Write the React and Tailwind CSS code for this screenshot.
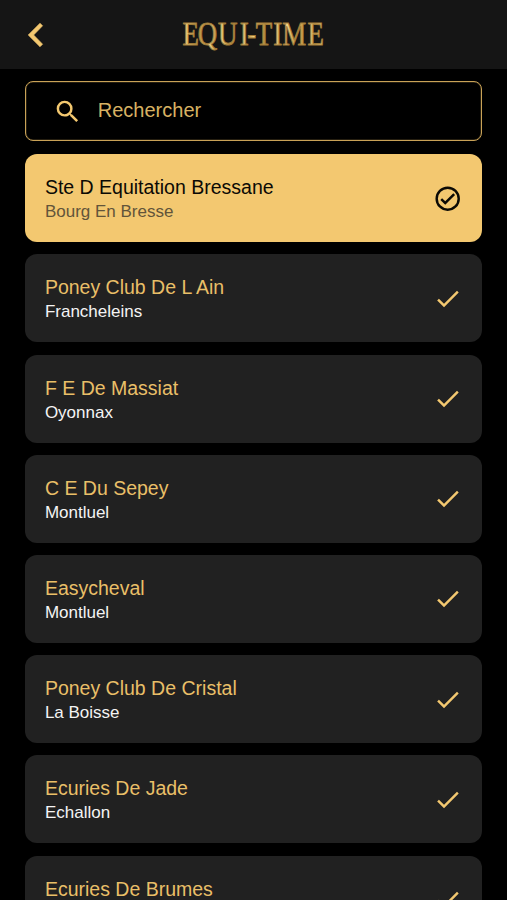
import React, { useState } from 'react';

const clubs = [
    { id: 1, name: 'Ste D Equitation Bressane', city: 'Bourg En Bresse' },
    { id: 2, name: 'Poney Club De L Ain', city: 'Francheleins' },
    { id: 3, name: 'F E De Massiat', city: 'Oyonnax' },
    { id: 4, name: 'C E Du Sepey', city: 'Montluel' },
    { id: 5, name: 'Easycheval', city: 'Montluel' },
    { id: 6, name: 'Poney Club De Cristal', city: 'La Boisse' },
    { id: 7, name: 'Ecuries De Jade', city: 'Echallon' },
    { id: 8, name: 'Ecuries De Brumes', city: '' },
];

const Logo = () => (
    <svg width="144" height="40" viewBox="0 0 144 40" role="img" aria-label="EQUI-TIME">
        <defs>
            <linearGradient id="gold" gradientUnits="userSpaceOnUse" x1="0" x2="21" y1="0" y2="0" spreadMethod="reflect">
                <stop offset="0" stopColor="#c59c4e" />
                <stop offset="0.35" stopColor="#f2d388" />
                <stop offset="0.65" stopColor="#d6ae5c" />
                <stop offset="1" stopColor="#b58d42" />
            </linearGradient>
        </defs>
        <text
            transform="scale(0.79 1)"
            x="0.5 20 45.5 73 82.5 93.5 115.5 127 159"
            y="30.5"
            fontSize="34"
            fill="url(#gold)"
            stroke="#a07b38"
            strokeWidth="1"
            className="font-['Liberation_Serif',serif]"
        >
            EQUI-TIME
        </text>
    </svg>
);

const CheckIcon = () => (
    <svg width="29.4" height="29.4" viewBox="0 0 24 24" fill="#f3c870">
        <path d="M9 16.17L4.83 12l-1.42 1.41L9 19 21 7l-1.41-1.41z" />
    </svg>
);

const CheckCircleIcon = () => (
    <svg width="29.4" height="29.4" viewBox="0 0 24 24" fill="#0b0a05">
        <path d="M12 2a10 10 0 1 0 0 20 10 10 0 0 0 0-20m0 18a8 8 0 1 1 0-16 8 8 0 0 1 0 16m4.59-12.42L10 14.17l-2.59-2.58L6 13l4 4 8-8z" />
    </svg>
);

const ClubCard = ({ club, selected, onSelect }) => (
    <button
        onClick={() => onSelect(club.id)}
        className={`flex h-[88px] w-full shrink-0 items-center justify-between rounded-[12px] pr-[20px] pl-[19.5px] text-left ${selected ? 'bg-[#f3c870]' : 'bg-[#212121]'}`}
    >
        <div className="pt-[3px]">
            <div className={`text-[19.5px] leading-[25px] ${selected ? 'text-[#0b0a05]' : 'text-[#e9bf68]'}`}>{club.name}</div>
            <div className={`h-[24px] text-[17px] leading-[24px] ${selected ? 'text-[#62543a]' : 'text-[#f4f4f4]'}`}>{club.city}</div>
        </div>
        {selected ? <CheckCircleIcon /> : <CheckIcon />}
    </button>
);

const App = () => {
    const [selectedId, setSelectedId] = useState(1);

    return (
        <div className="flex h-screen flex-col overflow-hidden bg-black font-['Liberation_Sans',Arial,sans-serif]">
            <header className="grid h-[69px] shrink-0 grid-cols-[48px_1fr_48px] items-center bg-[#151515] px-[12px]">
                <button aria-label="Retour">
                    <svg width="48" height="48" viewBox="0 0 24 24" fill="#f3c870" stroke="#f3c870" strokeWidth="0.3" strokeLinejoin="round">
                        <path d="M15.3 16.58L10.83 12l4.47-4.59L14 6.1 8.1 12l5.9 5.9z" />
                    </svg>
                </button>
                <div className="flex justify-center">
                    <Logo />
                </div>
            </header>

            <div className="mr-[24.6px] ml-[25.4px] mt-[12.4px] flex h-[60px] shrink-0 items-center gap-[15px] rounded-[8px] border border-[#c9a257] pl-[27px] ring-[0.5px] ring-[#b89650]/40 ring-inset">
                <svg width="29.4" height="29.4" viewBox="0 0 24 24" fill="#f3c870">
                    <path d="M15.5 14h-.79l-.28-.27A6.47 6.47 0 0 0 16 9.5 6.5 6.5 0 1 0 9.5 16c1.61 0 3.09-.59 4.23-1.57l.27.28v.79l5 4.99L20.49 19zm-6 0a4.5 4.5 0 1 1 0-9 4.5 4.5 0 0 1 0 9z" />
                </svg>
                <input
                    type="text"
                    placeholder="Rechercher"
                    className="w-[340px] bg-transparent pb-[3px] text-[20px] text-[#e9bf68] outline-none placeholder:text-[#d8b263]"
                />
            </div>

            <main className="mt-[12.9px] flex flex-col gap-[12.2px] pr-[24.6px] pl-[25.4px]">
                {clubs.map((club) => (
                    <ClubCard key={club.id} club={club} selected={club.id === selectedId} onSelect={setSelectedId} />
                ))}
            </main>
        </div>
    );
};

export default App;
